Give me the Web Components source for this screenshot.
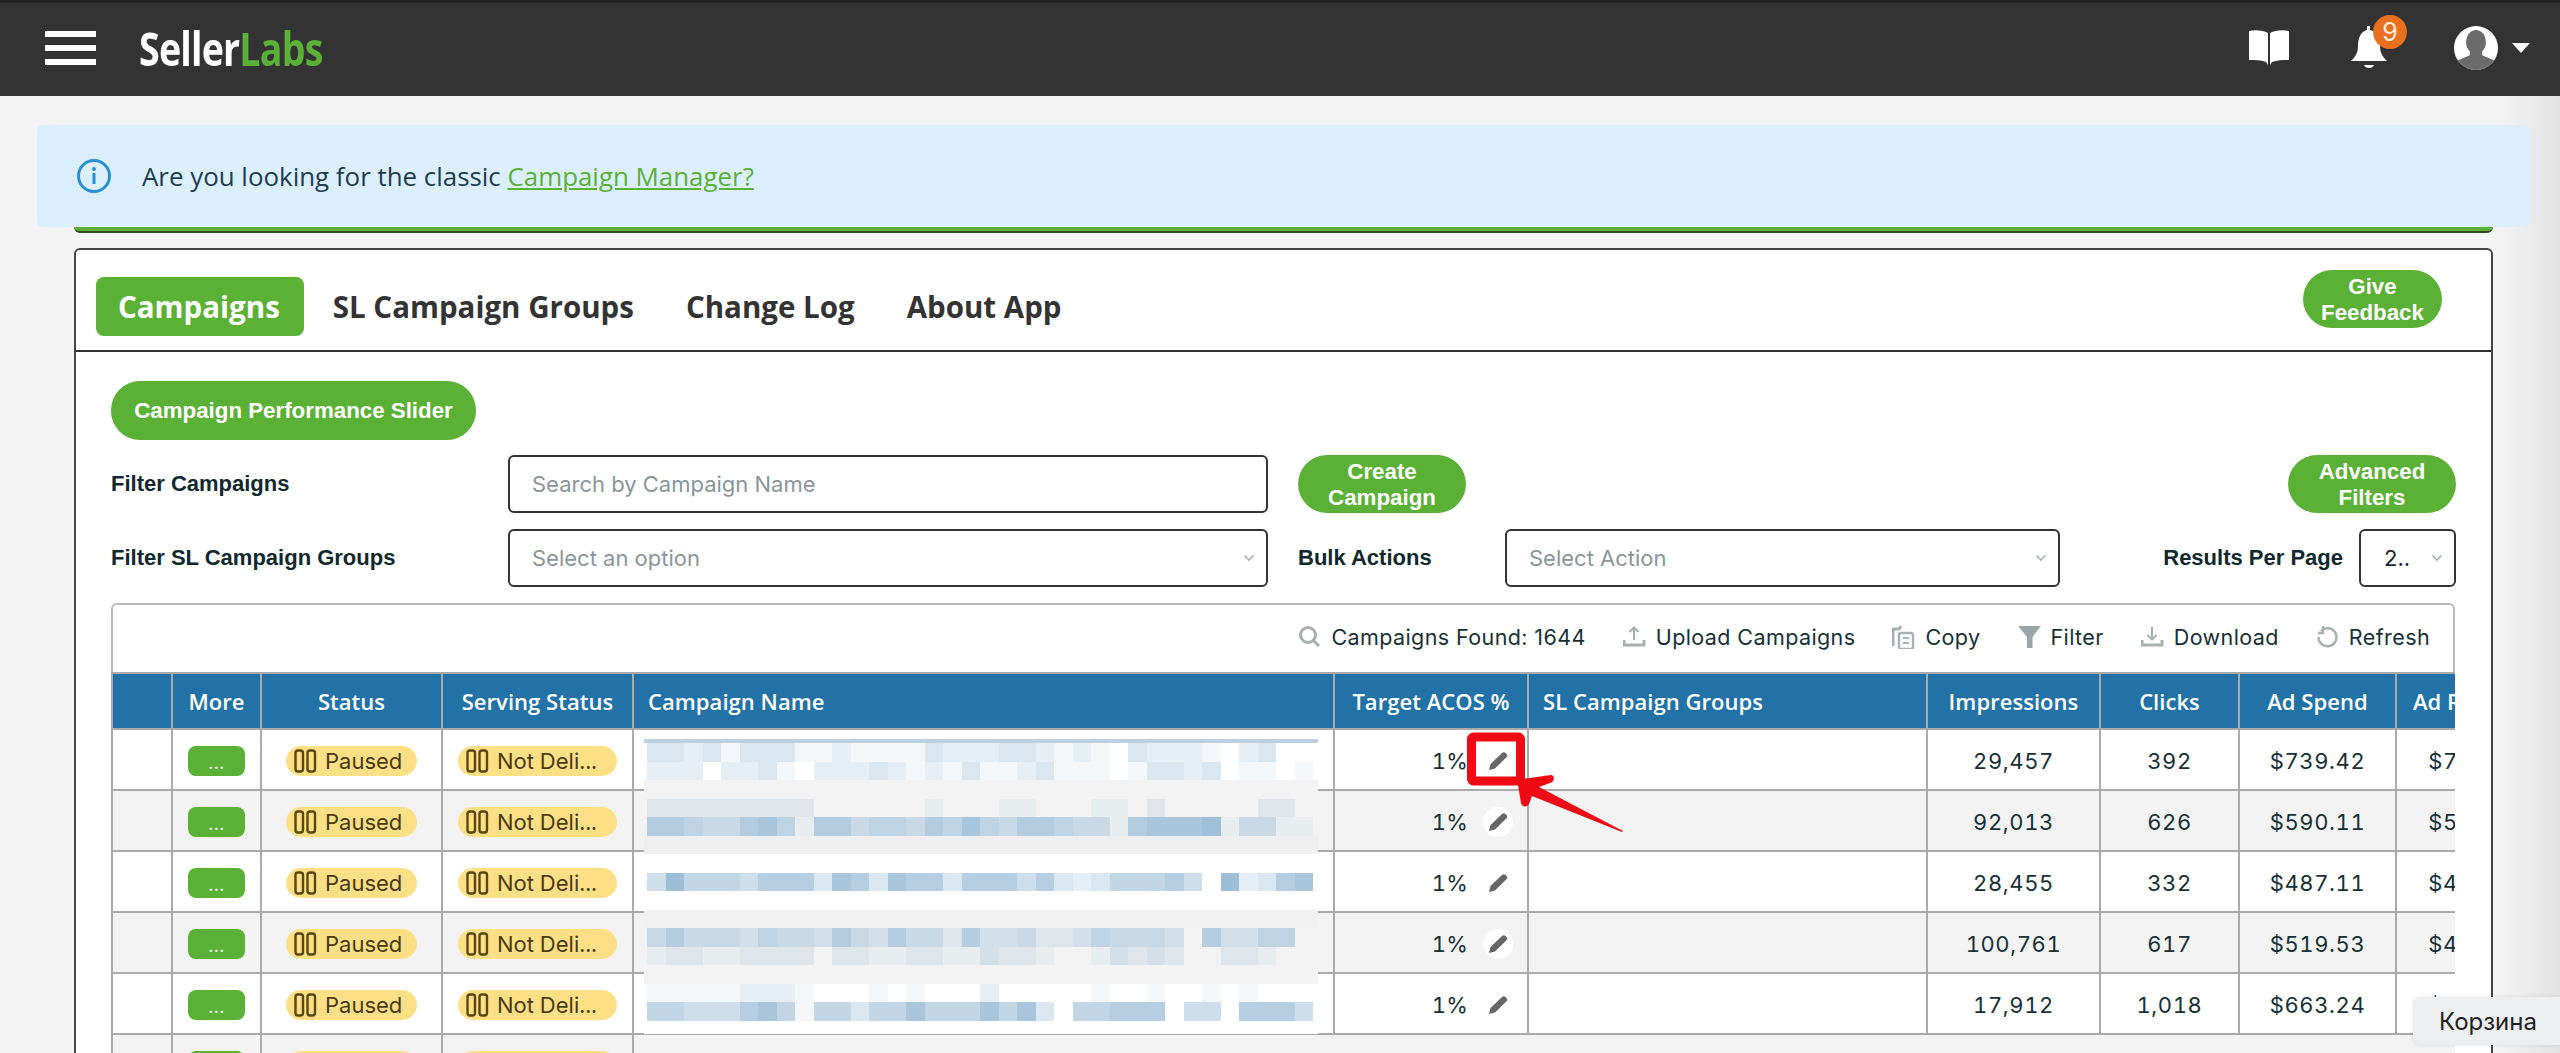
<!doctype html>
<html>
<head>
<meta charset="utf-8">
<title>Campaigns</title>
<style>
	html, body {
		margin: 0;
		padding: 0;
		overflow: hidden;
	}
</style>
</head>
<body>
<sl-page>
	<sl-topbar></sl-topbar>
	<sl-banner>Are you looking for the classic <a>Campaign Manager?</a></sl-banner>
	<sl-greenline></sl-greenline>
	<sl-card>
		<sl-tabs></sl-tabs>
		<sl-filters></sl-filters>
		<sl-toolbar></sl-toolbar>
		<sl-table></sl-table>
	</sl-card>
	<sl-mosaic></sl-mosaic>
	<sl-callout></sl-callout>
	<sl-tooltip>Корзина</sl-tooltip>
</sl-page>

<script>
const GREEN = '#5bb135'

class SlPage extends HTMLElement {
	constructor() {
		super()
		this.attachShadow({ mode: 'open' })
		this.shadowRoot.innerHTML = `
			<style>
				:host {
					display: block;
					position: relative;
					width: 2560px;
					height: 1053px;
					overflow: hidden;
					background: linear-gradient(to right, #f4f4f4 0, #f4f4f4 2500px, #e2e2e2 2560px);
					font-family: "Open Sans", sans-serif;
				}
			</style>
			<slot></slot>
		`
	}
}

class SlTopbar extends HTMLElement {
	constructor() {
		super()
		this.attachShadow({ mode: 'open' })
		this.shadowRoot.innerHTML = `
			<style>
				:host {
					display: flex;
					align-items: center;
					box-sizing: border-box;
					height: 96px;
					border-top: 3px solid #232323;
					background: #333;
					color: #fff;
				}
				.burger {
					display: flex;
					flex-direction: column;
					justify-content: space-between;
					width: 51px;
					height: 34px;
					margin: -3px 0 0 45px;
				}
				.burger i {
					display: block;
					height: 6px;
					background: #fff;
				}
				.logo {
					width: 183px;
					margin: -3px 0 0 43px;
					font-size: 47px;
					line-height: 46px;
					font-weight: 700;
					white-space: nowrap;
					letter-spacing: -1px;
					transform: scaleX(.8);
					transform-origin: left center;
				}
				.logo b {
					color: ${GREEN};
					font-weight: 700;
				}
				.icons {
					display: flex;
					align-items: center;
					margin: -3px 0 0 auto;
				}
				.bell {
					position: relative;
					width: 36px;
					height: 45px;
					margin-left: 62px;
				}
				.badge {
					position: absolute;
					left: 22px;
					top: -11px;
					width: 34px;
					height: 34px;
					border-radius: 50%;
					background: #e8701e;
					font: 25px/34px "Inter", sans-serif;
					text-align: center;
					color: #fde9d9;
				}
				svg {
					display: block;
				}
				.avatar {
					margin-left: 67px;
				}
				.caret {
					margin: 0 30px 0 14px;
				}
			</style>
			<div class="burger"><i></i><i></i><i></i></div>
			<div class="logo">Seller<b>Labs</b></div>
			<div class="icons">
				<svg width="40" height="36" viewBox="0 0 40 36" fill="#fff">
					<path d="M0 1C7 -.5 14 .5 19 3V35L17 32C12 30 6 30 0 30Z"/>
					<path d="M40 1C33 -.5 26 .5 21 3V35L23 32C28 30 34 30 40 30Z"/>
				</svg>
				<div class="bell">
					<svg width="36" height="45" viewBox="0 0 36 45" fill="#fff">
						<path d="M16 0H19V4C27 6 29 13 29 20C29 26 31 30 36 35H0C5 30 7 26 7 20C7 13 9 6 16 4Z"/>
						<path d="M13 39H23C22 43 14 43 13 39Z"/>
					</svg>
					<div class="badge">9</div>
				</div>
				<svg class="avatar" width="44" height="44" viewBox="0 0 44 44">
					<clipPath id="round"><circle cx="22" cy="22" r="22"/></clipPath>
					<circle cx="22" cy="22" r="22" fill="#fff"/>
					<g clip-path="url(#round)" fill="#6b6b6b">
						<ellipse cx="22" cy="16" rx="10" ry="12"/>
						<path d="M16 24H28V29C33 32 40 33 42 37V44H2V37C4 33 11 32 16 29Z"/>
					</g>
				</svg>
				<svg class="caret" width="18" height="10" viewBox="0 0 18 10" fill="#fff"><path d="M0 0H18L9 10Z"/></svg>
			</div>
		`
	}
}

class SlBanner extends HTMLElement {
	constructor() {
		super()
		this.attachShadow({ mode: 'open' })
		this.shadowRoot.innerHTML = `
			<style>
				:host {
					display: flex;
					align-items: center;
					position: relative;
					z-index: 1;
					height: 102px;
					margin: 29px 30px 0 37px;
					padding-left: 40px;
					box-sizing: border-box;
					border-radius: 6px;
					background: #dcefff;
					font-size: 25.900px;
					color: #1e3d52;
				}
				svg {
					margin-right: 31px;
				}
				::slotted(a) {
					color: ${GREEN};
					text-decoration: underline;
				}
			</style>
			<svg width="34" height="34" viewBox="0 0 34 34">
				<circle cx="17" cy="17" r="15.500" fill="none" stroke="#2b8fd6" stroke-width="3"/>
				<circle cx="17" cy="10" r="2" fill="#2b8fd6"/>
				<rect x="15.500" y="14" width="3" height="11" fill="#2b8fd6"/>
			</svg>
			<span><slot></slot></span>
		`
	}
}

class SlGreenline extends HTMLElement {
	constructor() {
		super()
		this.attachShadow({ mode: 'open' })
		this.shadowRoot.innerHTML = `
			<style>
				:host {
					display: block;
					box-sizing: border-box;
					width: 2419px;
					height: 6px;
					margin-left: 74px;
					background: ${GREEN};
					border-bottom: 2px solid #2f4a25;
					border-radius: 0 0 6px 6px;
				}
			</style>
		`
	}
}

class SlCard extends HTMLElement {
	constructor() {
		super()
		this.attachShadow({ mode: 'open' })
		this.shadowRoot.innerHTML = `
			<style>
				:host {
					display: block;
					box-sizing: border-box;
					width: 2419px;
					height: 900px;
					margin: 15px 0 0 74px;
					border: 2px solid #444;
					border-radius: 6px;
					background: #fff;
				}
			</style>
			<slot></slot>
		`
	}
}

class SlPillButton extends HTMLElement {
	constructor() {
		super()
		this.attachShadow({ mode: 'open' })
		this.shadowRoot.innerHTML = `
			<style>
				:host {
					display: inline-flex;
					align-items: center;
					justify-content: center;
					box-sizing: border-box;
					height: 58px;
					padding: 0 24px;
					border-radius: 29px;
					background: ${GREEN};
					color: #fff;
					font: 700 22.300px/26px "Liberation Sans", sans-serif;
					text-align: center;
				}
			</style>
			<slot></slot>
		`
	}
}

class SlTabs extends HTMLElement {
	constructor() {
		super()
		this.attachShadow({ mode: 'open' })
		this.shadowRoot.innerHTML = `
			<style>
				:host {
					display: flex;
					align-items: flex-start;
					box-sizing: border-box;
					height: 102px;
					padding: 27px 0 0 20px;
					border-bottom: 2px solid #333;
					font: 700 29.500px/59px "Open Sans", sans-serif;
					color: #333;
				}
				.tab {
					height: 59px;
					padding: 0 26px;
				}
				.tab.active {
					margin-right: 3px;
					padding: 0 24px 0 22px;
					border-radius: 8px;
					background: ${GREEN};
					color: #fff;
				}
				sl-pill-button {
					width: 139px;
					padding: 2px 0 0;
					margin: -7px 49px 0 auto;
				}
			</style>
			<div class="tab active">Campaigns</div>
			<div class="tab">SL Campaign Groups</div>
			<div class="tab">Change Log</div>
			<div class="tab">About App</div>
			<sl-pill-button>Give Feedback</sl-pill-button>
		`
	}
}

class SlField extends HTMLElement {
	constructor() {
		super()
		this.attachShadow({ mode: 'open' })
		this.shadowRoot.innerHTML = `
			<style>
				:host {
					display: flex;
					align-items: center;
					justify-content: space-between;
					box-sizing: border-box;
					height: 58px;
					padding: 0 11px 0 22px;
					border: 2px solid #333;
					border-radius: 6px;
					background: #fff;
					font: 22px "Inter", sans-serif;
					color: #8b969a;
					white-space: nowrap;
				}
				svg {
					display: none;
					flex: none;
				}
				:host([select]) svg {
					display: block;
				}
			</style>
			<slot></slot>
			<svg width="12" height="8" viewBox="0 0 12 8" fill="none" stroke="#a8b0b2" stroke-width="1.600"><path d="M1.500 1.500L6 6L10.500 1.500"/></svg>
		`
	}
}

class SlFilters extends HTMLElement {
	constructor() {
		super()
		this.attachShadow({ mode: 'open' })
		this.shadowRoot.innerHTML = `
			<style>
				:host {
					display: flex;
					flex-direction: column;
					gap: 16px;
					width: 2345px;
					padding: 29px 0 0 35px;
					font: 700 22px "Liberation Sans", sans-serif;
					color: #10282e;
				}
				.slider {
					margin: 0 0 -1px;
					align-self: flex-start;
					height: 59px;
					width: 365px;
					padding: 0;
				}
				.row {
					display: flex;
					align-items: center;
				}
				.label {
					width: 397px;
					flex: none;
				}
				.main {
					width: 760px;
					flex: none;
					margin-right: 30px;
				}
				.wrap {
					width: 168px;
					padding: 2px 26px 0;
				}
				.right {
					margin-left: auto;
				}
				.bulk {
					width: 207px;
					flex: none;
				}
				.action {
					width: 555px;
					flex: none;
				}
				.per-page {
					margin-left: auto;
					margin-right: 16px;
				}
				.small {
					width: 97px;
					flex: none;
					padding-left: 23px;
					color: #10282e;
				}
			</style>
			<sl-pill-button class="slider">Campaign Performance Slider</sl-pill-button>
			<div class="row">
				<div class="label">Filter Campaigns</div>
				<sl-field class="main">Search by Campaign Name</sl-field>
				<sl-pill-button class="wrap">Create Campaign</sl-pill-button>
				<sl-pill-button class="wrap right">Advanced Filters</sl-pill-button>
			</div>
			<div class="row">
				<div class="label">Filter SL Campaign Groups</div>
				<sl-field class="main" select>Select an option</sl-field>
				<div class="bulk">Bulk Actions</div>
				<sl-field class="action" select>Select Action</sl-field>
				<div class="per-page">Results Per Page</div>
				<sl-field class="small" select>2..</sl-field>
			</div>
		`
	}
}

const TOOL_ICONS = {
	search: '<circle cx="10" cy="10" r="7.500" fill="none" stroke-width="3"/><path d="M15.500 15.500L21 21" stroke-width="3" fill="none"/>',
	upload: '<path d="M11 15V3M6.500 7L11 2.500L15.500 7" fill="none" stroke-width="2"/><path d="M1 15V20H21V15" fill="none" stroke-width="3"/>',
	copy: '<rect x="7" y="8" width="14" height="16" rx="2" fill="none" stroke-width="2.400"/><path d="M11 13H17M11 18H17" stroke-width="2"/><path d="M1 21V4H7L9 1" fill="none" stroke-width="3"/>',
	filter: '<path d="M0 1H23L14.500 12V23H9V12Z" stroke="none" fill="#9aa5aa"/>',
	download: '<path d="M11 2V14M6.500 10L11 14.500L15.500 10" fill="none" stroke-width="2"/><path d="M1 15V20H21V15" fill="none" stroke-width="3"/>',
	refresh: '<path d="M5 6A9 9 0 1 1 2.500 12" fill="none" stroke-width="2.500"/><path d="M7 1V8H2" fill="none" stroke-width="2.400"/>',
}

class SlToolbar extends HTMLElement {
	constructor() {
		super()
		this.attachShadow({ mode: 'open' })
		const items = [
			['search', 'Campaigns Found: 1644'],
			['upload', 'Upload Campaigns'],
			['copy', 'Copy'],
			['filter', 'Filter'],
			['download', 'Download'],
			['refresh', 'Refresh'],
		]
		this.shadowRoot.innerHTML = `
			<style>
				:host {
					display: flex;
					align-items: center;
					justify-content: flex-end;
					gap: 37px;
					box-sizing: border-box;
					width: 2344px;
					height: 69px;
					margin: 16px 0 0 35px;
					padding: 0 23px 3px 0;
					border: 2px solid #bbb;
					border-bottom: 0;
					border-radius: 6px 6px 0 0;
					font: 21.500px "Inter", sans-serif;
					letter-spacing: .4px;
					color: #173036;
				}
				div {
					display: flex;
					align-items: center;
					gap: 10px;
				}
				svg {
					flex: none;
					stroke: #a8b0b2;
				}
			</style>
			${items.map(([icon, text]) => `
				<div>
					<svg width="23" height="24" viewBox="0 0 23 24">${TOOL_ICONS[icon]}</svg>
					<span>${text}</span>
				</div>
			`).join('')}
		`
	}
}

const PAUSE_ICON = `<svg width="23" height="24" viewBox="0 0 23 24" fill="none" stroke="#5a4610" stroke-width="2.400">
	<rect x="1.500" y="1.500" width="7.500" height="21" rx="2.500"/>
	<rect x="13.500" y="1.500" width="7.500" height="21" rx="2.500"/>
</svg>`
const PENCIL_ICON = `<svg width="20" height="20" viewBox="0 0 20 20" fill="#666">
	<path d="M1 19L2.500 13L14 2C15 1 16.500 1 17.500 2L18.500 3C19.500 4 19.500 5.200 18.500 6.200L7 17.500Z"/>
</svg>`

const HEADERS = [
	['', 61],
	['More', 89],
	['Status', 181],
	['Serving Status', 191],
	['Campaign Name', 701, 'left'],
	['Target ACOS %', 194],
	['SL Campaign Groups', 399, 'left'],
	['Impressions', 173],
	['Clicks', 139],
	['Ad Spend', 157],
	['Ad Revenue', 160],
]

const ROWS = [
	['29,457', '392', '$739.42', '$739.11'],
	['92,013', '626', '$590.11', '$590.11'],
	['28,455', '332', '$487.11', '$487.11'],
	['100,761', '617', '$519.53', '$459.53'],
	['17,912', '1,018', '$663.24', '$163.24'],
]

class SlTable extends HTMLElement {
	constructor() {
		super()
		this.attachShadow({ mode: 'open' })
		const columns = HEADERS.map(h => `${h[1]}px`).join(' ')
		const rows = ROWS.map((row, i) => `
			<div class="row${i % 2 ? ' alt' : ''}">
				<div class="cell"></div>
				<div class="cell"><span class="more">...</span></div>
				<div class="cell"><span class="pill">${PAUSE_ICON}Paused</span></div>
				<div class="cell"><span class="pill long">${PAUSE_ICON}Not Deli...</span></div>
				<div class="cell"></div>
				<div class="cell target">1%<span class="edit">${PENCIL_ICON}</span></div>
				<div class="cell"></div>
				${row.map(v => `<div class="cell">${v}</div>`).join('')}
			</div>
		`).join('')
		this.shadowRoot.innerHTML = `
			<style>
				:host {
					display: block;
					width: 2344px;
					margin-left: 35px;
					overflow: hidden;
					border-left: 2px solid #aaa;
					box-sizing: border-box;
					font: 22px "Inter", sans-serif;
					font-variant-numeric: tabular-nums;
					letter-spacing: .6px;
					color: #173036;
				}
				.row {
					display: grid;
					grid-template-columns: ${columns};
					height: 61px;
					margin-left: -1px;
				}
				.alt {
					background: #f3f3f3;
				}
				.head {
					height: 58px;
					background: #2272a8;
					color: #fff;
					font: 600 22px "Open Sans", sans-serif;
					letter-spacing: .05px;
					border-top: 2px solid #aaa;
					box-sizing: border-box;
				}
				.cell {
					display: flex;
					align-items: center;
					justify-content: center;
					box-sizing: border-box;
					padding-top: 2px;
					border-right: 2px solid #aaa;
					border-bottom: 2px solid #aaa;
					white-space: nowrap;
					overflow: hidden;
				}
				.head .cell {
					padding-top: 0;
				}
				.cell.left {
					justify-content: flex-start;
					padding-left: 14px;
				}
				.target {
					justify-content: flex-end;
					padding-right: 14px;
					letter-spacing: .2px;
				}
				.edit {
					display: flex;
					align-items: center;
					justify-content: center;
					width: 30px;
					height: 30px;
					margin-left: 15px;
					border-radius: 50%;
					background: #fff;
				}
				.more {
					display: block;
					width: 57px;
					height: 30px;
					border-radius: 8px;
					background: ${GREEN};
					color: #fff;
					font-size: 18px;
					line-height: 34px;
					text-align: center;
				}
				.pill {
					display: flex;
					align-items: center;
					gap: 8px;
					box-sizing: border-box;
					width: 131px;
					height: 30px;
					padding-left: 8px;
					border-radius: 15px;
					background: #fde085;
					color: #4a3a10;
					letter-spacing: 0;
				}
				.pill.long {
					width: 159px;
				}
			</style>
			<div class="row head">
				${HEADERS.map(h => `<div class="cell${h[2] ? ' left' : ''}">${h[0]}</div>`).join('')}
			</div>
			${rows}
			<div class="row alt">
				<div class="cell"></div>
				<div class="cell"><span class="more"></span></div>
				<div class="cell"><span class="pill"></span></div>
				<div class="cell"><span class="pill long"></span></div>
			</div>
		`
	}
}

// blurred campaign names, one digit per block (0 = row colour, 8 = darkest blue)
const MOSAIC = [
	['#fff', '332313331121111322233212103222102300'],
	['#fff', '222022310222321213112311101332301101'],
	['#f3f3f3'],
	['#f3f3f3', '222222222000000100011000110200000220'],
	['#f3f3f3', '665446751664554657546654416777814411'],
	['#efefef'],
	['#fff'],
	['#fff', '485554666376376636664632355564082367'],
	['#fff'],
	['#f1f1f1'],
	['#f3f3f3', '464443544364364426334223544430633550'],
	['#f3f3f3', '122112222022112211322100132320022100'],
	['#f3f3f3'],
	['#fff', '111112221000101000200000100100101000'],
	['#fff', '554446751553557555757305566604406664'],
]

function mix(base, amount) {
	const hex = base.length === 4 ? base.replace(/[0-9a-f]/g, '$&$&') : base
	const from = [1, 3, 5].map(i => parseInt(hex.substr(i, 2), 16))
	const to = [169, 198, 220]
	return `rgb(${from.map((v, i) => Math.round(v + (to[i] - v) * amount)).join(',')})`
}

class SlMosaic extends HTMLElement {
	constructor() {
		super()
		this.attachShadow({ mode: 'open' })
		const rows = MOSAIC.map(([base, blocks]) => {
			const cells = (blocks || '').split('').map(b => `<i style="background:${mix(base, Number(b) / 7)}"></i>`).join('')
			return `<div class="line" style="background:${base}">${cells}</div>`
		}).join('')
		this.shadowRoot.innerHTML = `
			<style>
				:host {
					display: block;
					position: absolute;
					left: 644px;
					top: 739px;
					width: 674px;
					height: 295px;
					background: #fff;
				}
				.inner {
					filter: blur(.5px);
				}
				.top {
					height: 4px;
					background: #bcd0e0;
				}
				.line {
					display: flex;
					height: 18.500px;
					padding-left: 3px;
				}
				i {
					display: block;
					width: 18.500px;
				}
			</style>
			<div class="inner">
				<div class="top"></div>
				${rows}
			</div>
		`
	}
}

class SlCallout extends HTMLElement {
	constructor() {
		super()
		this.attachShadow({ mode: 'open' })
		this.shadowRoot.innerHTML = `
			<style>
				:host {
					display: block;
					position: absolute;
					left: 1460px;
					top: 725px;
				}
				svg {
					display: block;
				}
			</style>
			<svg width="180" height="120" viewBox="0 0 180 120">
				<rect x="11.500" y="12" width="49" height="44" rx="2" fill="none" stroke="#f00a14" stroke-width="9"/>
				<path d="M62 54L91 50C95 50 95 57 90 58L79 62L163 106L162 107L72 71L69 79C66 83 62 82 61 78L58 60C58 56 59 55 62 54Z" fill="#f00a14"/>
			</svg>
		`
	}
}

class SlTooltip extends HTMLElement {
	constructor() {
		super()
		this.attachShadow({ mode: 'open' })
		this.shadowRoot.innerHTML = `
			<style>
				:host {
					display: flex;
					align-items: center;
					position: absolute;
					left: 2413px;
					top: 997px;
					box-sizing: border-box;
					width: 147px;
					height: 48px;
					padding-left: 26px;
					border-radius: 8px 0 0 8px;
					background: #edeeef;
					box-shadow: 0 0 4px rgba(0, 0, 0, .1);
					font: 24px "Inter", sans-serif;
					color: #222;
				}
			</style>
			<slot></slot>
		`
	}
}

window.customElements.define('sl-page', SlPage)
window.customElements.define('sl-topbar', SlTopbar)
window.customElements.define('sl-banner', SlBanner)
window.customElements.define('sl-greenline', SlGreenline)
window.customElements.define('sl-card', SlCard)
window.customElements.define('sl-pill-button', SlPillButton)
window.customElements.define('sl-tabs', SlTabs)
window.customElements.define('sl-field', SlField)
window.customElements.define('sl-filters', SlFilters)
window.customElements.define('sl-toolbar', SlToolbar)
window.customElements.define('sl-table', SlTable)
window.customElements.define('sl-mosaic', SlMosaic)
window.customElements.define('sl-callout', SlCallout)
window.customElements.define('sl-tooltip', SlTooltip)
</script>
</body>
</html>
